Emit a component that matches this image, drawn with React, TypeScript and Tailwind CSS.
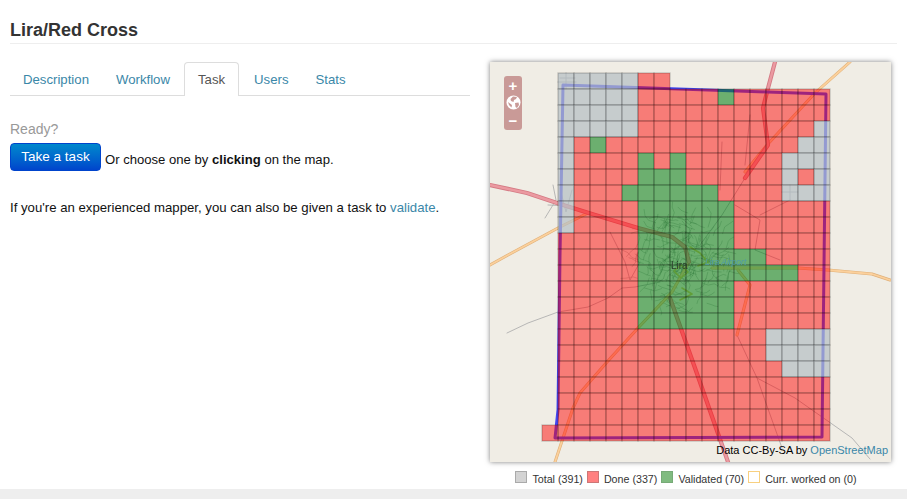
import React from "react";

const CW = 16;
const X0 = 558;
const Y0 = 73;

type Cell = [number, number, "r" | "g" | "y"];

function buildCells(): Cell[] {
  const cells: Cell[] = [];
  const inR = (v: number, a: number, b: number) => v >= a && v <= b;
  for (let r = 0; r < 23; r++) {
    for (let c = 0; c < 17; c++) {
      if (r === 0 && c > 6) continue;
      let t: "r" | "g" | "y" = "r";
      if (r <= 3 && c <= 4) t = "y";
      if (r <= 9 && c === 0) t = "y";
      if (r === 3 && c === 16) t = "y";
      if (r === 4 && c >= 15) t = "y";
      if (r === 5 && c >= 14) t = "y";
      if (r === 6 && (c === 14 || c === 16)) t = "y";
      if (r === 7 && c >= 14) t = "y";
      if (inR(r, 16, 17) && c >= 13) t = "y";
      if (r === 18 && c >= 14) t = "y";
      if (r === 1 && c === 10) t = "g";
      if (r === 4 && c === 2) t = "g";
      if (r === 5 && (c === 5 || c === 7)) t = "g";
      if (r === 6 && inR(c, 5, 7)) t = "g";
      if (r === 7 && inR(c, 4, 9)) t = "g";
      if (inR(r, 8, 10) && inR(c, 5, 10)) t = "g";
      if (r === 11 && inR(c, 5, 12)) t = "g";
      if (r === 12 && inR(c, 5, 14)) t = "g";
      if (inR(r, 13, 15) && inR(c, 5, 10)) t = "g";
      cells.push([c, r, t]);
    }
  }
  cells.push([-1, 22, "r"]);
  return cells;
}

function buildStreets(): string {
  let seed = 12345;
  const rnd = () => {
    seed = (seed * 16807) % 2147483647;
    return seed / 2147483647;
  };
  let d = "";
  for (let i = 0; i < 200; i++) {
    const a = rnd() * Math.PI * 2;
    const rad = Math.pow(rnd(), 0.8) * 50;
    let x = 682 + Math.cos(a) * rad;
    let y = 262 + Math.sin(a) * rad;
    d += `M${x.toFixed(1)} ${y.toFixed(1)}`;
    let dir = Math.floor(rnd() * 4) * (Math.PI / 2) + 0.3;
    for (let s = 0; s < 3; s++) {
      const l = 2 + rnd() * 6;
      x += Math.cos(dir) * l;
      y += Math.sin(dir) * l;
      d += `L${x.toFixed(1)} ${y.toFixed(1)}`;
      dir += (rnd() - 0.5) * 1.6;
    }
  }
  return d;
}

const cells = buildCells();
const streets = buildStreets();

const redRoads = [
  "M490 185L527 193L560 204L592 214L638 228L672 237L685 247L689 262",
  "M775 62L767 92L763 108L768 145L745 178",
  "M670 298L695 368L715 425L728 462",
];
const orangeRoads = [
  "M850 62L815 93L767 145L745 172",
  "M490 265L508 255L558 228L588 213",
  "M712 268L742 268L798 268L828 270L872 274L890 280",
  "M689 262L672 292L638 328L607 362L580 393L573 408L555 462",
  "M738 270L750 285L737 335",
];
const grayRoads = [
  "M507 333L528 323L558 312L588 307L608 298L622 288L635 287L660 282",
  "M737 335L757 378L795 398L852 438L870 459",
  "M757 378L782 448",
  "M745 178L722 215L700 245",
  "M553 185L556 200L545 218M560 188L566 212L572 190M548 205L570 206",
  "M735 205L760 220L755 250L780 260M760 215L790 200M610 232L625 262L630 280L640 262",
  "M750 115L745 165M722 142L720 190",
  "M560 78L575 78M558 82L576 82M566 73L566 89",
  "M790 185L790 200M782 192L798 192",
];

function Globe() {
  return (
    <svg width="15" height="15" viewBox="0 0 15 15">
      <circle cx="7.5" cy="7.5" r="7" fill="#fff" />
      <path
        d="M7 1.5L11 2L10 4L8 5L7.5 7L5 6L4.5 4ZM9 8L12.5 7.5L13 10L11 13L9.5 12ZM2 7L4 8.5L6 10L5.5 12.5L3 10Z"
        fill="#c99a97"
      />
    </svg>
  );
}

function LegendItem({ color, border, label }: { color: string; border: string; label: string }) {
  return (
    <div className="flex items-center gap-[5px]">
      <span className={`mb-[3px] block size-[12px] border ${color} ${border}`} />
      <span className="text-[10.7px] leading-[14px] text-[#333]">{label}</span>
    </div>
  );
}

export default function App() {
  return (
    <div className="flex h-[499px] w-[907px] flex-col overflow-hidden bg-white font-['Liberation_Sans',Arial,sans-serif] text-[13.2px] text-[#111]">
      <div className="mx-[10px] mb-[18px] h-[44px] border-b border-[#eee] pt-[18px]">
        <h1 className="text-[18px] font-bold leading-[24px] text-[#333]">Lira/Red Cross</h1>
      </div>
      <div className="flex flex-1 pl-[10px]">
        <div className="w-[460px]">
          <div className="flex h-[34px] border-b border-[#ddd] text-[13.2px]">
            <a className="px-[13px] pt-[9px] leading-[18px] text-[#3a87a8]">Description</a>
            <a className="px-[14px] pt-[9px] leading-[18px] text-[#3a87a8]">Workflow</a>
            <a className="-mb-px rounded-t border border-b-0 border-[#ddd] bg-white px-[13px] pt-[8px] leading-[18px] text-[#555]">
              Task
            </a>
            <a className="pl-[15px] pr-[14px] pt-[9px] leading-[18px] text-[#3a87a8]">Users</a>
            <a className="pl-[13px] pr-[15px] pt-[9px] leading-[18px] text-[#3a87a8]">Stats</a>
          </div>
          <p className="mt-[24px] text-[14px] leading-[18px] text-[#999]">Ready?</p>
          <div className="mt-[5px] flex items-center">
            <button className="h-[28px] w-[91px] rounded border border-[#04c] bg-gradient-to-b from-[#08c] to-[#04c] pt-px text-[13.5px] text-white">
              Take a task
            </button>
            <span className="ml-[4px] mt-[5px] text-[13.1px]">
              Or choose one by <b>clicking</b> on the map.
            </span>
          </div>
          <p className="mt-[28px] leading-[18px]">
            If you're an experienced mapper, you can also be given a task to{" "}
            <a className="text-[#3a87a8]">validate</a>.
          </p>
        </div>
        <div className="ml-[20px] w-[401px]">
          <div className="relative h-[400px] w-[401px] bg-[#f0ede5] shadow-[0_0_5px_rgba(0,0,0,0.5)]">
            <div className="h-full w-full overflow-hidden">
              <svg className="block blur-[0.5px]" width="401" height="400" viewBox="490 62 401 400">
                <rect x="488" y="60" width="405" height="404" fill="#f0ede5" />
                <g fill="none" strokeLinejoin="round" strokeLinecap="round">
                  <path d={streets} stroke="#66766b" strokeWidth="0.6" opacity="0.5" />
                  {grayRoads.map((d, i) => (
                    <path key={i} d={d} stroke="#b0b0b0" strokeWidth="0.9" />
                  ))}
                  {orangeRoads.map((d, i) => (
                    <g key={i}>
                      <path d={d} stroke="#e0b078" strokeWidth="3" />
                      <path d={d} stroke="#fbd09c" strokeWidth="1.8" />
                    </g>
                  ))}
                  {redRoads.map((d, i) => (
                    <g key={i}>
                      <path d={d} stroke="#d47a84" strokeWidth="4.2" />
                      <path d={d} stroke="#eb9aa1" strokeWidth="2.4" />
                    </g>
                  ))}
                  <path d="M674 271L681 265L688 272L681 278Z M690 247L700 253L708 262L698 266M682 288L692 294L680 300" stroke="#d8c76a" strokeWidth="1.6" />
                  <path d="M563 85L826 94L822 437L555 438L558 410L560 255Z" stroke="#4646f0" strokeWidth="3" />
                </g>
                {cells.map(([c, r, t]) => (
                  <rect
                    key={`${c}-${r}`}
                    x={X0 + c * CW}
                    y={Y0 + r * CW}
                    width={CW}
                    height={CW}
                    fill={t === "r" ? "rgba(255,0,0,0.48)" : t === "g" ? "rgba(0,124,15,0.55)" : "rgba(180,190,195,0.7)"}
                    stroke="rgba(0,0,0,0.2)"
                    strokeWidth="1.3"
                  />
                ))}
                <text x="671" y="269" fontSize="10" fill="#2c3e2c" fontFamily="Liberation Sans, sans-serif">
                  Lira
                </text>
                <text x="705" y="265" fontSize="8.5" fill="#4f9aa8" fontStyle="italic" fontFamily="Liberation Sans, sans-serif">
                  Lira Airport
                </text>
              </svg>
            </div>
            <div className="absolute left-[14px] top-[14px] flex h-[54px] w-[18px] flex-col items-center rounded-[3px] bg-[#c99a97] text-white">
              <span className="flex h-[18px] items-center text-[15px] font-bold leading-none">+</span>
              <span className="flex h-[16px] items-center">
                <Globe />
              </span>
              <span className="flex h-[20px] items-center text-[15px] font-bold leading-none">−</span>
            </div>
            <div className="absolute bottom-[5px] right-[3px] text-[11px] leading-[14px] text-black">
              Data CC-By-SA by <a className="text-[#3a87a8]">OpenStreetMap</a>
            </div>
          </div>
          <div className="mt-[9px] flex justify-center gap-[4px] pr-[9px]">
            <LegendItem color="bg-[#d3d3d3]" border="border-[#aaa]" label="Total (391)" />
            <LegendItem color="bg-[#ff8080]" border="border-[#cc7777]" label="Done (337)" />
            <LegendItem color="bg-[#80bb80]" border="border-[#77aa77]" label="Validated (70)" />
            <LegendItem color="bg-white" border="border-[#f8d080]" label="Curr. worked on (0)" />
          </div>
        </div>
      </div>
      <div className="h-[10px] bg-[#eee]" />
    </div>
  );
}
